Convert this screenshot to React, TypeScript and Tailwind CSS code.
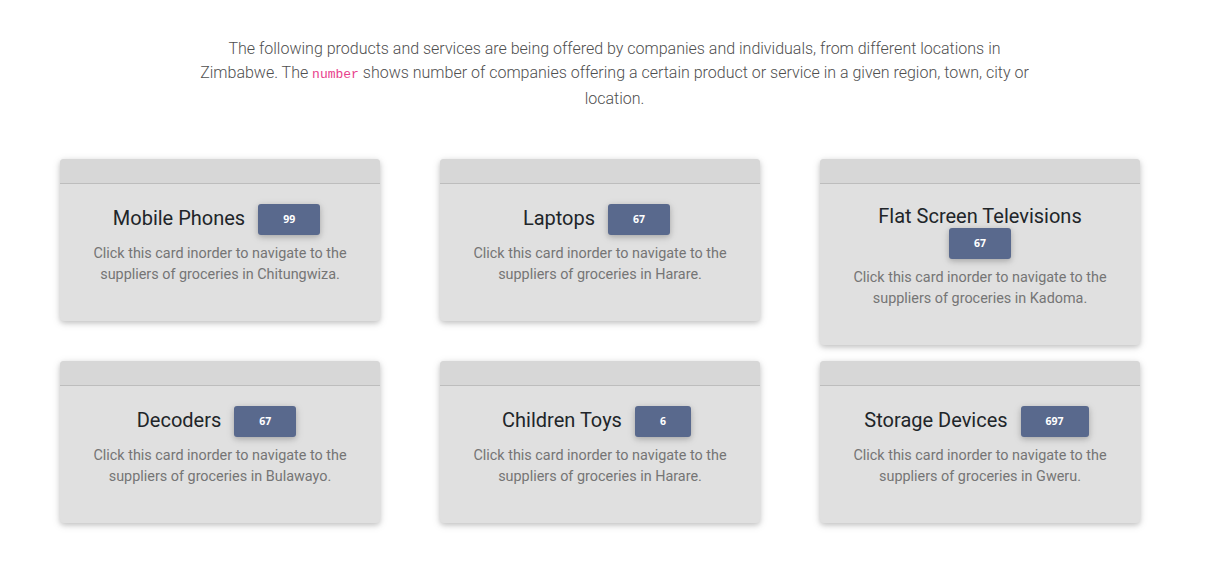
import React from "react";

const cards = [
  { title: "Mobile Phones", n: "99", city: "Chitungwiza", wrap: false },
  { title: "Laptops", n: "67", city: "Harare", wrap: false },
  { title: "Flat Screen Televisions", n: "67", city: "Kadoma", wrap: true },
  { title: "Decoders", n: "67", city: "Bulawayo", wrap: false },
  { title: "Children Toys", n: "6", city: "Harare", wrap: false },
  { title: "Storage Devices", n: "697", city: "Gweru", wrap: false },
];

export default function App() {
  return (
    <div className="min-h-[568px] bg-white" style={{ fontFamily: "Roboto, 'Noto Sans', sans-serif" }}>
      <div className="pt-[37px] flex justify-center pl-[15px]">
        <p className="w-[832px] text-center text-[16px] leading-[24px] font-light text-[#4f4f4f]">
          The following products and services are being offered by companies and individuals, from different locations in Zimbabwe. The{" "}
          <code className="text-[13px] text-[#e83e8c]" style={{ fontFamily: "'Liberation Mono', monospace" }}>number</code>{" "}
          shows number of companies offering a certain product or service in a given region, town, city or location.
        </p>
      </div>
      <div className="mt-[48px] pl-[60px] grid grid-cols-[320px_320px_320px] gap-x-[60px] gap-y-[16px] items-start">
        {cards.map((c, i) => (
          <div
            key={i}
            className="rounded-[4px] bg-[#e0e0e0] overflow-hidden shadow-[0_2px_5px_0_rgba(0,0,0,0.16),0_2px_10px_0_rgba(0,0,0,0.12)]"
          >
            <div className="h-[25px] bg-[#d7d7d7] border-b border-[#bdbdbd]" />
            <div className="px-[22px] pt-[20px] pb-[36px] text-center">
              <div className={"flex flex-wrap items-center justify-center gap-x-[13px] " + (c.wrap ? "" : "pr-[7px]")}>
                <span className={"text-[20px] leading-[24px] text-[#212529] " + (c.wrap ? "" : "mb-[3px]")}>{c.title}</span>
                <span className="inline-flex items-center justify-center px-[25px] h-[31px] rounded-[3px] bg-[#59698d] text-white text-[10.5px] font-bold shadow-[0_2px_5px_0_rgba(0,0,0,0.16),0_2px_10px_0_rgba(0,0,0,0.12)]" style={{ fontFamily: "'Open Sans', sans-serif" }}>
                  {c.n}
                </span>
              </div>
              <p className="mt-[8px] text-[14.4px] leading-[21px] text-[#757575]">
                Click this card inorder to navigate to the suppliers of groceries in {c.city}.
              </p>
            </div>
          </div>
        ))}
      </div>
    </div>
  );
}
